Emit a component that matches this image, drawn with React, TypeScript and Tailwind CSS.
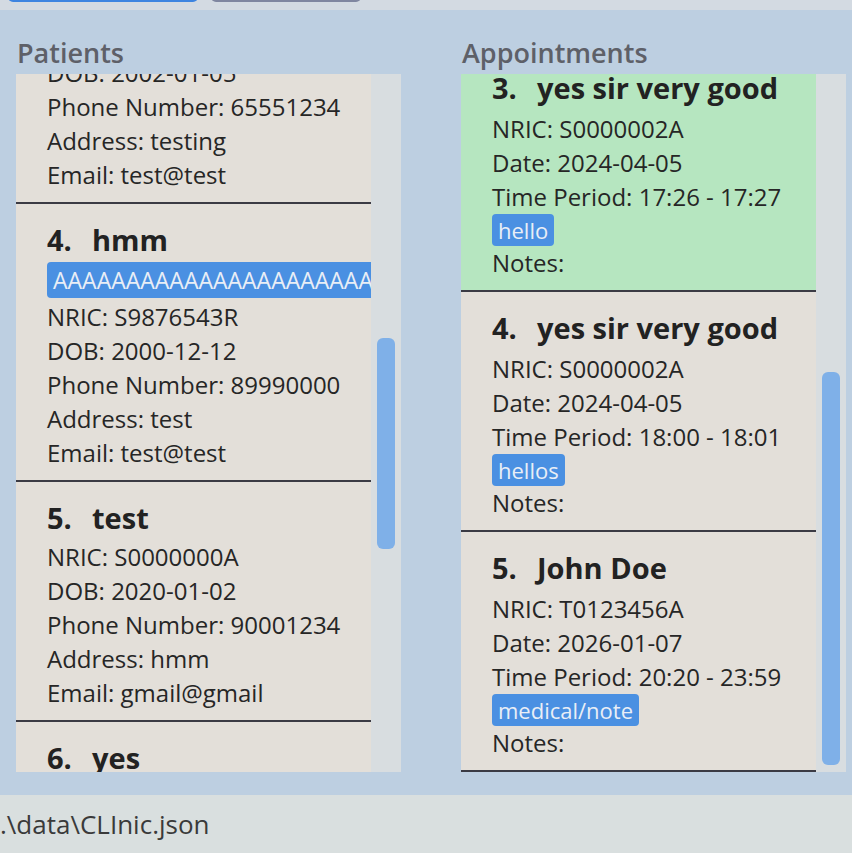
import React from 'react';

interface Patient {
  id: number;
  name: string;
  tags?: string[];
  nric: string;
  dob: string;
  phone: string;
  address: string;
  email: string;
}

interface Appointment {
  id: number;
  name: string;
  nric: string;
  date: string;
  period: string;
  tag: string;
  selected?: boolean;
}

const patients: Patient[] = [
  { id: 3, name: 'testing', nric: 'S0000001A', dob: '2002-01-05', phone: '65551234', address: 'testing', email: 'test@test' },
  { id: 4, name: 'hmm', tags: ['AAAAAAAAAAAAAAAAAAAAAAAAAAAAAAAAAAAA'], nric: 'S9876543R', dob: '2000-12-12', phone: '89990000', address: 'test', email: 'test@test' },
  { id: 5, name: 'test', nric: 'S0000000A', dob: '2020-01-02', phone: '90001234', address: 'hmm', email: 'gmail@gmail' },
  { id: 6, name: 'yes', nric: 'S1234567A', dob: '2001-01-01', phone: '91234567', address: 'yes', email: 'yes@yes' },
];

const appointments: Appointment[] = [
  { id: 3, name: 'yes sir very good', nric: 'S0000002A', date: '2024-04-05', period: '17:26 - 17:27', tag: 'hello', selected: true },
  { id: 4, name: 'yes sir very good', nric: 'S0000002A', date: '2024-04-05', period: '18:00 - 18:01', tag: 'hellos' },
  { id: 5, name: 'John Doe', nric: 'T0123456A', date: '2026-01-07', period: '20:20 - 23:59', tag: 'medical/note' },
];

function Title({ id, name }: { id: number; name: string }) {
  return (
    <div className="flex h-[40px] items-center text-[29px] font-bold leading-none text-[#222]">
      <span className="w-[45px]">{id}.</span>
      <span>{name}</span>
    </div>
  );
}

function PatientCard({ p }: { p: Patient }) {
  return (
    <div className="border-t-2 border-[#3b3b44] pt-[15px] pb-[10px] pl-[31px] first:border-t-0">
      <Title id={p.id} name={p.name} />
      <div className="mt-[3px]">
        {p.tags?.map((t) => (
          <div key={t} className="mt-[3px] mb-[2px] flex">
            <span className="h-[36px] whitespace-nowrap rounded-[4px] bg-[#4a90e2] px-[6px] text-[23px] leading-[36px] text-[#e9eef6]">{t}</span>
          </div>
        ))}
        <div className="h-[34px] leading-[34px]">NRIC: {p.nric}</div>
        <div className="h-[34px] leading-[34px]">DOB: {p.dob}</div>
        <div className="h-[34px] leading-[34px]">Phone Number: {p.phone}</div>
        <div className="h-[34px] leading-[34px]">Address: {p.address}</div>
        <div className="h-[34px] leading-[34px]">Email: {p.email}</div>
      </div>
    </div>
  );
}

function AppointmentCard({ a }: { a: Appointment }) {
  return (
    <div className={`border-b-2 border-[#3b3b44] pt-[15px] pb-[10px] pl-[31px] ${a.selected ? 'bg-[#b6e6c0]' : 'bg-[#e3dfd9]'}`}>
      <Title id={a.id} name={a.name} />
      <div className="mt-[5px]">
        <div className="h-[34px] leading-[34px]">NRIC: {a.nric}</div>
        <div className="h-[34px] leading-[34px]">Date: {a.date}</div>
        <div className="h-[34px] leading-[34px]">Time Period: {a.period}</div>
        <div className="flex">
          <span className="h-[32px] rounded-[4px] bg-[#4a90e2] px-[6px] text-[22px] leading-[32px] text-[#e9eef6]">{a.tag}</span>
        </div>
        <div className="h-[34px] leading-[34px]">Notes:</div>
      </div>
    </div>
  );
}

function ScrollTrack({ offset, size }: { offset: string; size: string }) {
  return (
    <div className="w-[30px] shrink-0 bg-[#d8dde0] px-[6px]">
      <div className={`${offset} ${size} rounded-[6px] bg-[#7fb0e8]`} />
    </div>
  );
}

export default function App() {
  return (
    <div
      className="flex h-[853px] w-[852px] flex-col overflow-hidden text-[24px] text-[#262626]"
      style={{ fontFamily: '"Open Sans", "Noto Sans", sans-serif' }}
    >
      <div className="flex h-[10px] shrink-0 items-end overflow-hidden bg-[#d3dae2]">
        <div className="mb-[8px] ml-[8px] h-[30px] w-[190px] rounded-[5px] bg-[#3d84e0]" />
        <div className="mb-[8px] ml-[13px] h-[30px] w-[150px] rounded-[5px] bg-[#7f86a0]" />
      </div>

      <div className="flex h-[785px] shrink-0 gap-[60px] bg-[#bdcfe1] pl-[16px]">
        <div className="flex w-[385px] flex-col">
          <div className="flex h-[64px] items-end pb-[1px] pl-[1px] text-[27px] font-semibold text-[#5e6068]">Patients</div>
          <div className="flex h-[698px]">
            <div className="w-[355px] overflow-hidden bg-[#e3dfd9]">
              <div className="-mt-[110px]">
                {patients.map((p) => (
                  <PatientCard key={p.id} p={p} />
                ))}
              </div>
            </div>
            <ScrollTrack offset="mt-[264px]" size="h-[211px]" />
          </div>
        </div>

        <div className="flex w-[385px] flex-col">
          <div className="flex h-[64px] items-end pb-[1px] pl-[1px] text-[27px] font-semibold text-[#5e6068]">Appointments</div>
          <div className="flex h-[698px]">
            <div className="w-[355px] overflow-hidden bg-[#e3dfd9]">
              <div className="-mt-[22px]">
                {appointments.map((a) => (
                  <AppointmentCard key={a.id} a={a} />
                ))}
              </div>
            </div>
            <ScrollTrack offset="mt-[298px]" size="h-[393px]" />
          </div>
        </div>
      </div>

      <div className="flex h-[58px] shrink-0 items-center bg-[#d9dfdf] text-[26px] text-[#3a3a3a]">.\data\CLInic.json</div>
    </div>
  );
}
